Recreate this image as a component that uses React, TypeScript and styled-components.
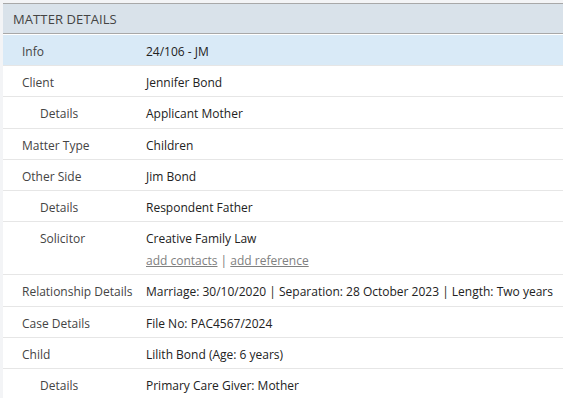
import React from "react";
import styled, { createGlobalStyle } from "styled-components";

const GlobalStyle = createGlobalStyle`
  html, body {
    margin: 0;
    padding: 0;
    background: #f3f4f6;
  }
  body {
    font-family: "Open Sans", "Noto Sans", sans-serif;
    font-size: 12px;
    color: #222;
  }
`;

const Panel = styled.section`
  margin: 3px 0 0 3px;
  background: #fff;
  min-height: 395px;
`;

const Header = styled.div`
  height: 29px;
  display: flex;
  align-items: center;
  padding-left: 10px;
  background: #d9e2ea;
  border-top: 1px solid #a8a8a8;
  border-bottom: 1px solid #a8a8a8;
  margin-bottom: 1px;
  color: #444;
  font-size: 13px;
  letter-spacing: 0.1px;
`;

const Row = styled.div<{ $active?: boolean }>`
  display: grid;
  grid-template-columns: 143px 1fr;
  padding: 9px 0 5.2px;
  line-height: 16px;
  min-height: 16px;
  background: ${(p) => (p.$active ? "#d9eaf7" : "#fff")};
  border-bottom: 1px solid #e6e6e6;
`;

const Label = styled.div<{ $sub?: boolean }>`
  padding-left: ${(p) => (p.$sub ? 37 : 19)}px;
  color: #444;
  white-space: nowrap;
`;

const Value = styled.div`
  color: #222;
  white-space: nowrap;
`;

const Links = styled.div`
  margin-top: 6px;
  color: #777;
`;

const LinkText = styled.a`
  color: #808080;
  text-decoration: underline;
  cursor: pointer;
`;

type Item = { label: string; value: string; sub?: boolean; active?: boolean; links?: boolean };

const items: Item[] = [
  { label: "Info", value: "24/106 - JM", active: true },
  { label: "Client", value: "Jennifer Bond" },
  { label: "Details", value: "Applicant Mother", sub: true },
  { label: "Matter Type", value: "Children" },
  { label: "Other Side", value: "Jim Bond" },
  { label: "Details", value: "Respondent Father", sub: true },
  { label: "Solicitor", value: "Creative Family Law", sub: true, links: true },
  {
    label: "Relationship Details",
    value: "Marriage: 30/10/2020 | Separation: 28 October 2023 | Length: Two years",
  },
  { label: "Case Details", value: "File No: PAC4567/2024" },
  { label: "Child", value: "Lilith Bond (Age: 6 years)" },
  { label: "Details", value: "Primary Care Giver: Mother", sub: true },
];

const App: React.FC = () => {
  return (
    <>
      <GlobalStyle />
      <Panel>
        <Header>MATTER DETAILS</Header>
        {items.map((it, i) => (
          <Row key={i} $active={it.active}>
            <Label $sub={it.sub}>{it.label}</Label>
            <Value>
              {it.value}
              {it.links && (
                <Links>
                  <LinkText>add contacts</LinkText> | <LinkText>add reference</LinkText>
                </Links>
              )}
            </Value>
          </Row>
        ))}
      </Panel>
    </>
  );
};

export default App;
